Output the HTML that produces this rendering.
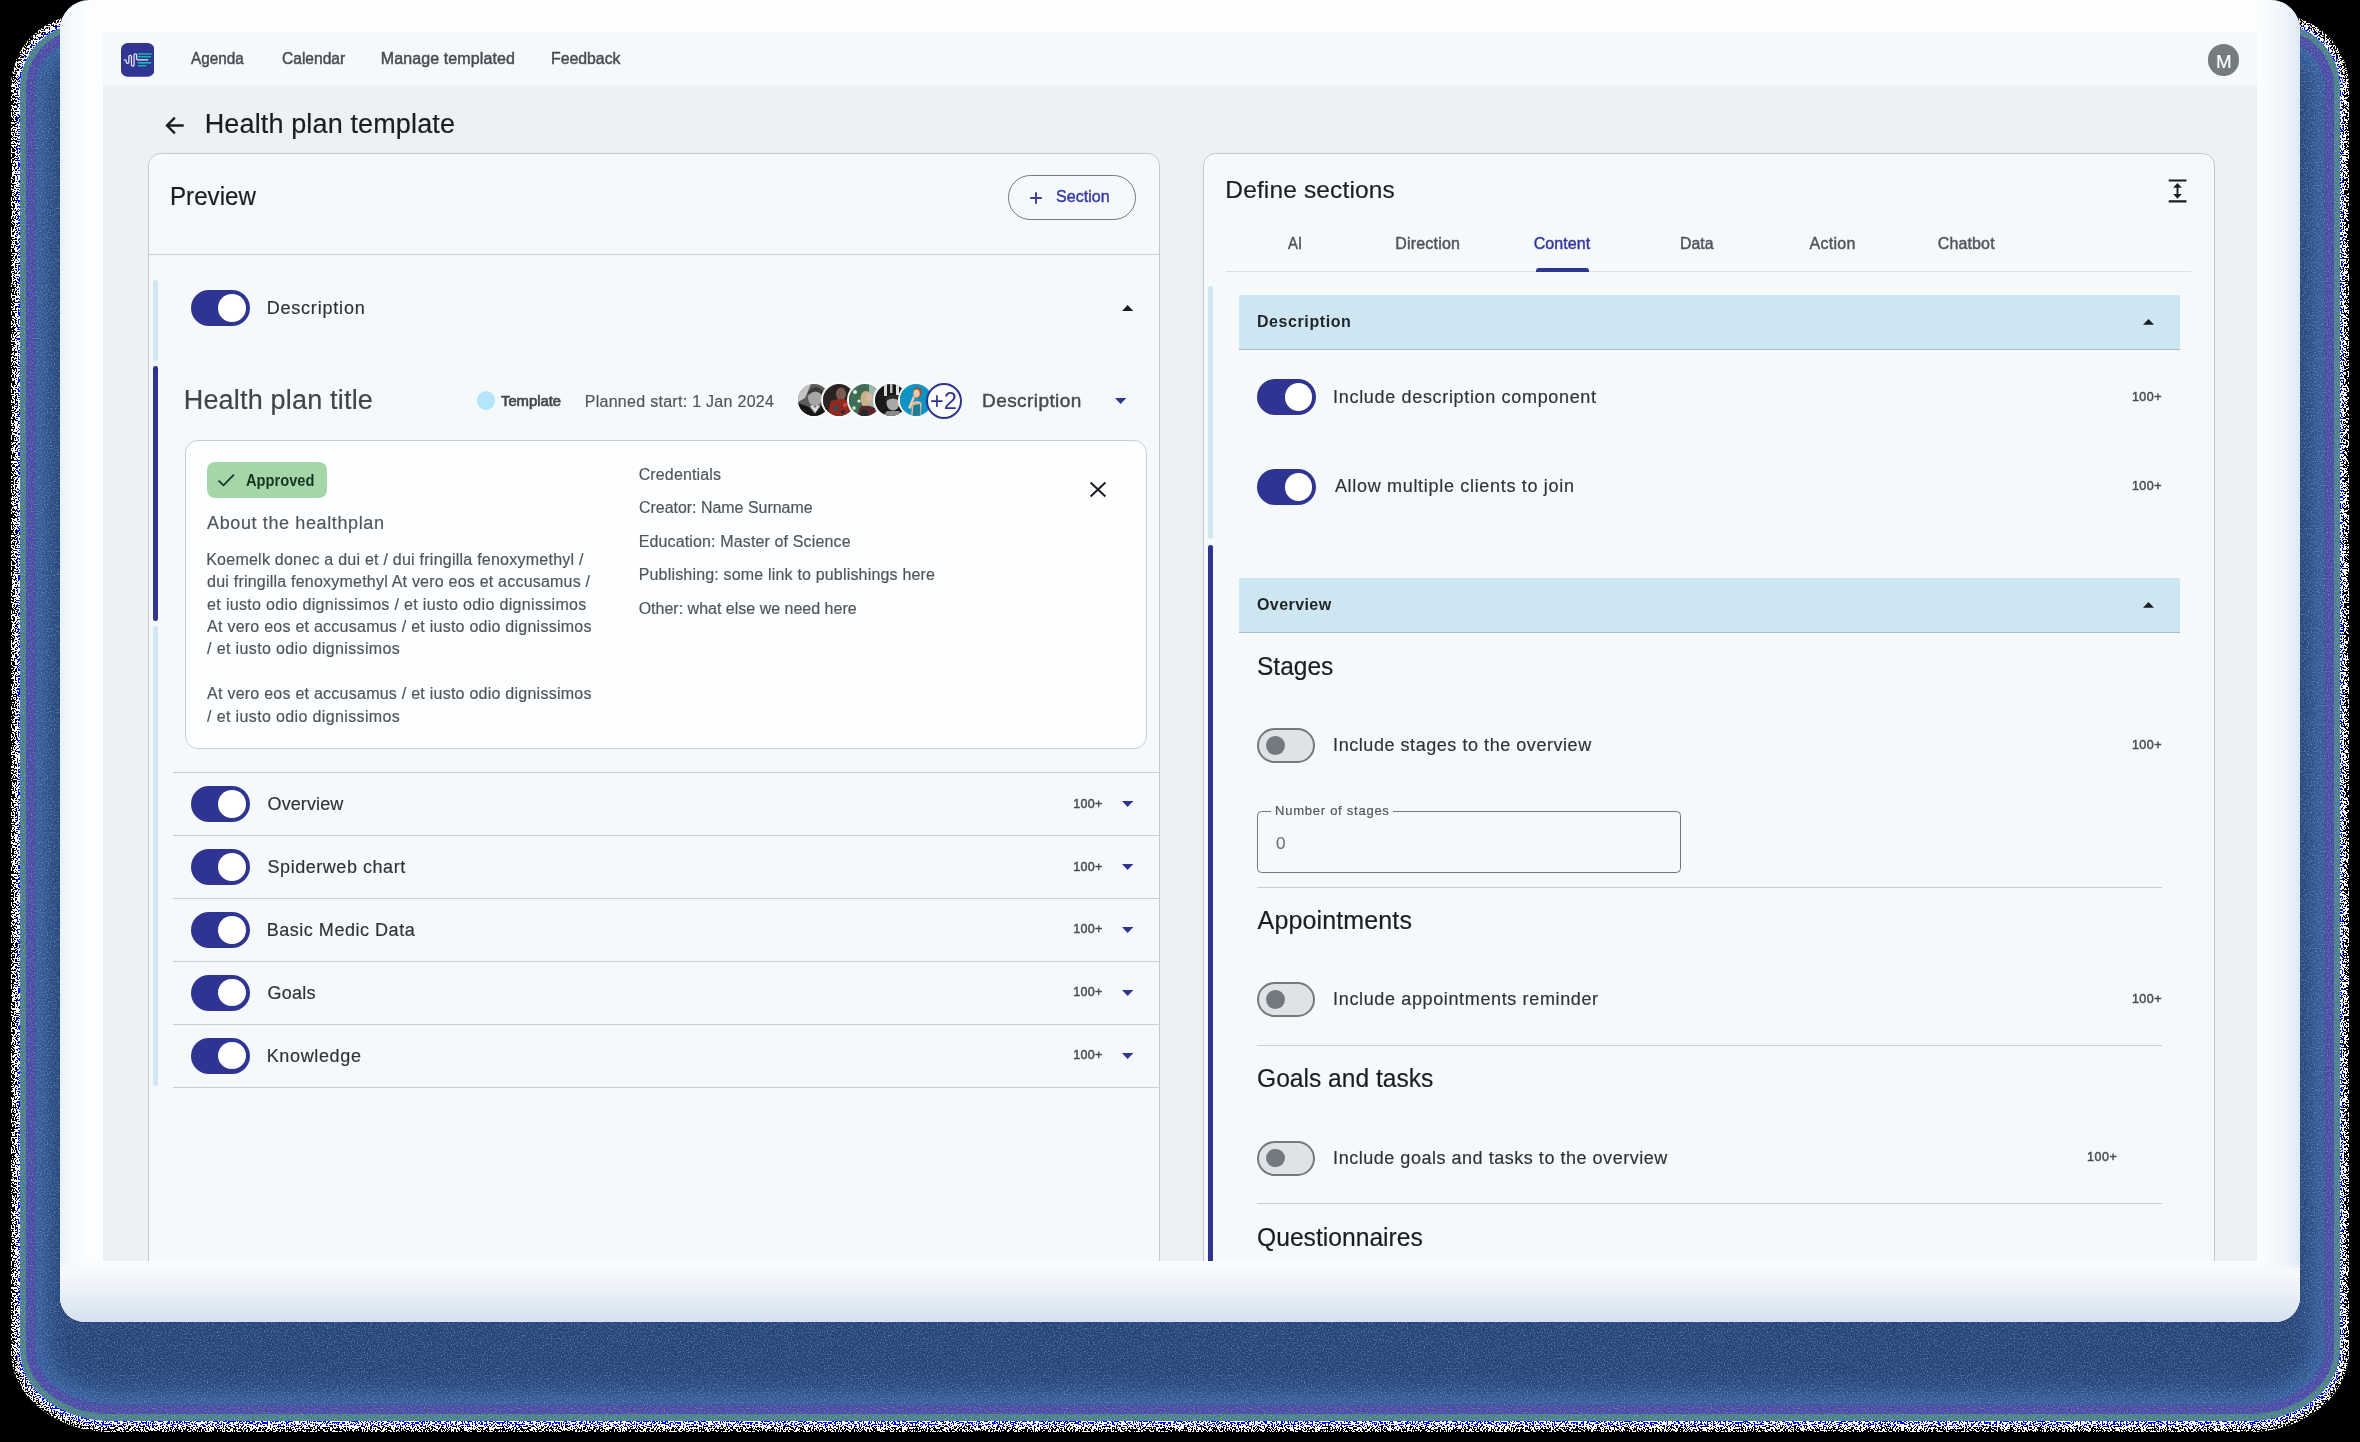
<!DOCTYPE html>
<html lang="en"><head><meta charset="utf-8"><title>Health plan template</title>
<style>

*{box-sizing:border-box;margin:0;padding:0}
html,body{width:2360px;height:1442px;overflow:hidden;background:#000}
body{position:relative;font-family:"Liberation Sans",sans-serif}
.a{position:absolute;display:block}
#txt{position:absolute;left:0;top:0;width:2360px;height:1442px;will-change:transform}
#txt .t{position:absolute;white-space:nowrap;transform-origin:0 50%;font-family:"Liberation Sans",sans-serif}
/* shadow layers (alpha dropped look) */
#s0{left:11px;top:15px;width:2338px;height:1417px;border-radius:72px 72px 100px 100px/72px 72px 80px 80px;background:#82869b}
#s0b{left:11px;top:15px;width:2338px;height:1417px;border-radius:72px 72px 100px 100px/72px 72px 80px 80px;background:#000;clip-path:inset(0)}
#s0b2{left:14px;top:18px;width:2332px;height:1411px;border-radius:69px 69px 97px 97px/69px 69px 77px 77px;background:#000}
#s0c{left:17px;top:21px;width:2326px;height:1405px;border-radius:66px 66px 94px 94px/66px 66px 74px 74px;background:#000}
#sn{left:20px;top:24px;width:2320px;height:1397px;border-radius:63px 63px 91px 91px/63px 63px 71px 71px;background:#000}
#s1{left:20px;top:24px;width:2320px;height:1397px;border-radius:63px 63px 91px 91px/63px 63px 71px 71px;background:#4a8087}
#s2{left:26px;top:30px;width:2308px;height:1384px;border-radius:57px 57px 85px 85px/57px 57px 64px 64px;background:#4a4ba4}
#s3{left:36px;top:40px;width:2288px;height:1364px;border-radius:47px 47px 75px 75px/47px 47px 54px 54px;background:#37629f}
#s4{left:66px;top:70px;width:2228px;height:1304px;border-radius:20px 20px 45px 45px/20px 20px 26px 26px;background:#254377;box-shadow:0 0 10px 12px #27467b,0 0 16px 22px #2b5088}
#frame{left:60px;top:-0.5px;width:2240px;height:1322.5px;border-radius:29.5px 29.5px 25px 25px;background:#fbfdfe;overflow:hidden}
#frame .g{left:0;top:0;width:100%;height:100%}
#screen{left:103px;top:32px;width:2154px;height:1229px;background:#edf1f4;overflow:hidden}
#nav{left:0;top:0;width:2154px;height:54px;background:#f5f9fc;box-shadow:0 1px 0 #e8ecf0}
.panel{top:121px;width:1012px;height:1200px;border:1px solid #c1c9cf;border-radius:12.5px;background:#f5f9fc}
.hl{height:1px;background:#c7ced4}
.bar{width:4.6px;border-radius:2.3px}
.tg{width:59px;height:36px;border-radius:18px;background:#2f3391}
.tg i{position:absolute;left:27.3px;top:4.2px;width:27.6px;height:27.6px;border-radius:50%;background:#fff}
.to{width:58px;height:35px;border-radius:17.5px;background:#dfe3e6;border:2px solid #737a7f}
.to i{position:absolute;left:6.4px;top:6.1px;width:18.8px;height:18.8px;border-radius:50%;background:#737a7f}
.band{left:1136.3px;width:940.5px;height:55px;background:#cee6f1;border-bottom:1px solid #a9bdc9}
.av{width:36px;height:36px;border-radius:50%;border:2px solid #fbfdfe;overflow:hidden}
.av svg{display:block}

</style></head>
<body>
<svg width="0" height="0" style="position:absolute"><defs><filter id="nbw" x="0" y="0" width="100%" height="100%" color-interpolation-filters="sRGB"><feTurbulence type="fractalNoise" baseFrequency="0.62" numOctaves="1" seed="3"/><feColorMatrix type="matrix" values="1 0 0 0 0  1 0 0 0 0  1 0 0 0 0  0 0 0 0 1"/><feComponentTransfer><feFuncR type="discrete" tableValues="0 0 0 0 0 0 0 0 0 0 0 0 0 0 0 0 0 0 0 0 0 1 1 1 1 1 1 1 1 1 1 1 1 1 1 1 1 1 1 1"/><feFuncG type="discrete" tableValues="0 0 0 0 0 0 0 0 0 0 0 0 0 0 0 0 0 0 0 0 0 1 1 1 1 1 1 1 1 1 1 1 1 1 1 1 1 1 1 1"/><feFuncB type="discrete" tableValues="0 0 0 0 0 0 0 0 0 0 0 0 0 0 0 0 0 0 0 0 0 1 1 1 1 1 1 1 1 1 1 1 1 1 1 1 1 1 1 1"/></feComponentTransfer><feComposite operator="in" in2="SourceGraphic"/></filter><filter id="nbw2" x="0" y="0" width="100%" height="100%" color-interpolation-filters="sRGB"><feTurbulence type="fractalNoise" baseFrequency="0.62" numOctaves="1" seed="5"/><feColorMatrix type="matrix" values="1 0 0 0 0  1 0 0 0 0  1 0 0 0 0  0 0 0 0 1"/><feComponentTransfer><feFuncR type="discrete" tableValues="0 0 0 0 0 0 0 0 0 0 0 0 0 0 0 0 0 0 0 1 1 1 1 1 1 1 1 1 1 1 1 1 1 1 1 1 1 1 1 1"/><feFuncG type="discrete" tableValues="0 0 0 0 0 0 0 0 0 0 0 0 0 0 0 0 0 0 0 1 1 1 1 1 1 1 1 1 1 1 1 1 1 1 1 1 1 1 1 1"/><feFuncB type="discrete" tableValues="0 0 0 0 0 0 0 0 0 0 0 0 0 0 0 0 0 0 0 1 1 1 1 1 1 1 1 1 1 1 1 1 1 1 1 1 1 1 1 1"/></feComponentTransfer><feComposite operator="in" in2="SourceGraphic"/></filter><filter id="nbl" x="0" y="0" width="100%" height="100%" color-interpolation-filters="sRGB"><feTurbulence type="fractalNoise" baseFrequency="0.62" numOctaves="1" seed="11"/><feColorMatrix type="matrix" values="1 0 0 0 0  1 0 0 0 0  0 0 0 0 1  0 0 0 0 1"/><feComponentTransfer><feFuncR type="discrete" tableValues="0 0 0 0 0 0 0 0 0 0 0 0 0 0 0 0 0 0 0 1 1 1 1 1 1 1 1 1 1 1 1 1 1 1 1 1 1 1 1 1"/><feFuncG type="discrete" tableValues="0 0 0 0 0 0 0 0 0 0 0 0 0 0 0 0 0 0 0 1 1 1 1 1 1 1 1 1 1 1 1 1 1 1 1 1 1 1 1 1"/></feComponentTransfer><feComposite operator="in" in2="SourceGraphic"/></filter><filter id="ng" x="0" y="0" width="100%" height="100%" color-interpolation-filters="sRGB"><feTurbulence type="fractalNoise" baseFrequency="0.7" numOctaves="1" seed="7"/><feColorMatrix type="matrix" values="0 0 0 0 0.7  0 0 0 0 0.78  0 0 0 0 0.9  1.3 0 0 0 -0.6"/><feComposite operator="in" in2="SourceGraphic"/></filter></defs></svg>
<div class="a" id="s0"></div><div class="a" id="s0b" style="filter:url(#nbw)"></div><div class="a" id="s0b2" style="filter:url(#nbw2)"></div><div class="a" id="s0c" style="filter:url(#nbl)"></div><div class="a" id="s1"></div><div class="a" id="s2"></div><div class="a" id="s3"></div><div class="a" id="s4"></div><div class="a" id="sn" style="filter:url(#ng)"></div>
<div class="a" id="frame"><div class="a g" style="background:linear-gradient(90deg,#ebf1f9 0,#f5f9fd 9px,rgba(251,253,254,0) 26px)"></div><div class="a g" style="background:linear-gradient(270deg,#dfe9f4 0,#eef4fa 14px,rgba(251,253,254,0) 40px)"></div><div class="a g" style="background:linear-gradient(180deg,rgba(251,253,254,0) 1262px,#f6f9fc 1272px,#eef3f9 1286px,#e3ecf5 1301px,#d4e1ef 1322px)"></div></div>
<div class="a" id="screen">
<div class="a" id="nav"></div>
<svg class="a" style="left:17.75px;top:11.15px" width="33.3" height="34" viewBox="0 0 33.3 34"><rect width="33.3" height="33.75" rx="6.6" fill="#2f3591"/><g fill="none" stroke-linecap="round"><path d="M3.2 16.9 H4.2 Q5.25 16.9 5.25 18.1 V19.1 A1.3 1.3 0 0 0 7.85 19.1 V13.6 A1.3 1.3 0 0 1 10.45 13.6 V21.8 A1.3 1.3 0 0 0 13.05 21.8 V12.1 A1.3 1.3 0 0 1 15.65 12.1 V15.7 Q15.65 16.9 16.9 16.9 H26.85" stroke="#e9e9f6" stroke-width="1.25"/><path d="M17.4 11h12.7M17.4 13.8h12.1M17.4 19.9h12.3M17.4 22.8h7.4" stroke="#14b5b2" stroke-width="1.55"/></g></svg>
<div class="a" style="left:2104.9px;top:12.4px;width:31.4px;height:31.4px;border-radius:50%;background:#757c80"></div>
<svg class="a" style="left:62.0px;top:83.9px" width="20" height="19" viewBox="0 0 20 19"><path d="M18.7 9.5H2.4M9.9 1.7L2 9.5l7.9 7.8" fill="none" stroke="#1b1d20" stroke-width="2.35"/></svg>
<div class="a panel" style="left:45px"></div>
<div class="a hl" style="left:46px;top:222px;width:1010px"></div>
<div class="a" style="left:905px;top:143.2px;width:128.2px;height:44.7px;border-radius:22.4px;border:1.2px solid #72797e"></div>
<svg class="a" style="left:927.0px;top:159.5px" width="12" height="12" viewBox="0 0 12 12"><path d="M6 0.2v11.6M0.2 6h11.6" stroke="#3a3d9f" stroke-width="1.9"/></svg>
<div class="a bar" style="left:50.2px;top:247.8px;height:80.8px;background:#cfe7f2"></div>
<div class="a bar" style="left:50.2px;top:334.2px;height:255px;background:#2f3391"></div>
<div class="a bar" style="left:50.2px;top:594.3px;height:460px;background:#cfe7f2"></div>
<div class="a tg" style="left:87.9px;top:258px"><i></i></div>
<svg class="a" style="left:1018.5px;top:272.7px" width="11.3" height="6.0" viewBox="0 0 11.3 6.0"><polygon points="0,6.0 5.65,0 11.3,6.0" fill="#1b1d20"/></svg>
<div class="a" style="left:373.9px;top:359.4px;width:18.3px;height:18.3px;border-radius:50%;background:#b3e5fc"></div>
<div class="a av" style="left:692.5px;top:350.4px"><svg width="32" height="32" viewBox="0 0 32 32"><rect width="32" height="32" fill="#5c5c5c"/><path d="M0 0H13L7 14L0 18Z" fill="#c4c4c4"/><ellipse cx="17" cy="13.5" rx="7" ry="8.5" fill="#a6a6a6"/><path d="M10 8 Q17 -1 25 7 L24.5 11 Q17 4 10.5 11Z" fill="#3a3a3a"/><path d="M0 19 L11 23 L17 30 L23 22 L32 17 V32 H0Z" fill="#161616"/><path d="M12 22 L17 29 L22 22 L19 21 L17 24 L15 21Z" fill="#d8d8d8"/></svg></div>
<div class="a av" style="left:718.2px;top:350.4px"><svg width="32" height="32" viewBox="0 0 32 32"><rect width="32" height="32" fill="#2a2322"/><ellipse cx="18" cy="10" rx="5" ry="6.5" fill="#7a5a52"/><path d="M4 32 L8 17 Q18 13 27 17 L31 32Z" fill="#8e2a1f"/><circle cx="13" cy="24" r="2.6" fill="#3d4a5c"/><circle cx="22" cy="21" r="2.2" fill="#c4493a"/><circle cx="20" cy="28" r="2" fill="#2f2a33"/></svg></div>
<div class="a av" style="left:743.9px;top:350.4px"><svg width="32" height="32" viewBox="0 0 32 32"><rect width="32" height="32" fill="#3f6e52"/><rect x="20" width="12" height="32" fill="#9fb5ae"/><circle cx="6" cy="8" r="2" fill="#dfeee6"/><circle cx="10" cy="17" r="1.6" fill="#e8f2ec"/><circle cx="5" cy="24" r="1.8" fill="#d3e6da"/><ellipse cx="17" cy="15" rx="5.5" ry="8" fill="#c9b18a"/><ellipse cx="20" cy="13" rx="3" ry="4" fill="#d9b9a6"/><path d="M8 32 L11 23 Q18 20 26 24 L28 32Z" fill="#5a2430"/><path d="M10 32 L13 26 L19 27 L18 32Z" fill="#1d2b2a"/></svg></div>
<div class="a av" style="left:769.6px;top:350.4px"><svg width="32" height="32" viewBox="0 0 32 32"><rect width="32" height="32" fill="#191919"/><rect x="9" y="0" width="3" height="12" fill="#d8d8d8"/><rect x="15" y="0" width="2.5" height="9" fill="#bdbdbd"/><rect x="21" y="1" width="3" height="10" fill="#e2e2e2"/><ellipse cx="18" cy="19" rx="6.5" ry="7.5" fill="#a9a9a9"/><path d="M10 14 Q18 7 26 14 L25 17 Q18 12 11 17Z" fill="#2b2b2b"/><path d="M8 32 L12 27 L24 27 L28 32Z" fill="#8a8a8a"/></svg></div>
<div class="a av" style="left:795.3px;top:350.4px"><svg width="32" height="32" viewBox="0 0 32 32"><rect width="32" height="32" fill="#0f93c4"/><ellipse cx="17.5" cy="8.5" rx="4.6" ry="5.4" fill="#8a5a3c"/><ellipse cx="16.5" cy="9.5" rx="3.2" ry="4" fill="#f0c8a8"/><path d="M11 32 L12.5 19 Q17 15 21.5 19 L21 32Z" fill="#e9bf9f"/><path d="M12.5 32 L13.5 21 L20 20 L20.5 32Z" fill="#1f7c93"/><path d="M8 24 L13 12 L15 13 L11 25Z" fill="#efc6a6"/></svg></div>
<div class="a" style="left:822.5px;top:351.0px;width:36.3px;height:36.3px;border-radius:50%;border:2.4px solid #2f3391;background:#fdfeff"></div>
<svg class="a" style="left:1011.9px;top:365.8px" width="11.3" height="6.0" viewBox="0 0 11.3 6.0"><polygon points="0,0 11.3,0 5.65,6.0" fill="#2f3391"/></svg>
<div class="a" style="left:82.3px;top:408.2px;width:961.5px;height:308.6px;border:1px solid #c8ced4;border-radius:13px;background:#fdfeff"></div>
<div class="a" style="left:103.9px;top:430.3px;width:120.2px;height:35.8px;border-radius:8px;background:#a5d6a7"></div>
<svg class="a" style="left:114px;top:440px" width="19" height="16" viewBox="0 0 19 16"><path d="M1.6 8.6l4.9 4.7L16.9 2.6" fill="none" stroke="#173526" stroke-width="1.8"/></svg>
<svg class="a" style="left:986px;top:449px" width="18" height="17" viewBox="0 0 18 17"><path d="M1.6 1.5l14.8 14M16.4 1.5L1.6 15.5" fill="none" stroke="#1b1d20" stroke-width="2"/></svg>
<div class="a hl" style="left:70px;top:739.7px;width:986.5px"></div>
<div class="a hl" style="left:70px;top:803.0px;width:986.5px"></div>
<div class="a hl" style="left:70px;top:866.1px;width:986.5px"></div>
<div class="a hl" style="left:70px;top:928.9px;width:986.5px"></div>
<div class="a hl" style="left:70px;top:991.9px;width:986.5px"></div>
<div class="a hl" style="left:70px;top:1054.7px;width:986.5px"></div>
<div class="a tg" style="left:87.9px;top:754.0px"><i></i></div>
<svg class="a" style="left:1018.7px;top:769.2px" width="11.3" height="6.0" viewBox="0 0 11.3 6.0"><polygon points="0,0 11.3,0 5.65,6.0" fill="#2f3391"/></svg>
<div class="a tg" style="left:87.9px;top:817.0px"><i></i></div>
<svg class="a" style="left:1018.7px;top:832.2px" width="11.3" height="6.0" viewBox="0 0 11.3 6.0"><polygon points="0,0 11.3,0 5.65,6.0" fill="#2f3391"/></svg>
<div class="a tg" style="left:87.9px;top:880.0px"><i></i></div>
<svg class="a" style="left:1018.7px;top:895.2px" width="11.3" height="6.0" viewBox="0 0 11.3 6.0"><polygon points="0,0 11.3,0 5.65,6.0" fill="#2f3391"/></svg>
<div class="a tg" style="left:87.9px;top:942.7px"><i></i></div>
<svg class="a" style="left:1018.7px;top:957.9px" width="11.3" height="6.0" viewBox="0 0 11.3 6.0"><polygon points="0,0 11.3,0 5.65,6.0" fill="#2f3391"/></svg>
<div class="a tg" style="left:87.9px;top:1005.5px"><i></i></div>
<svg class="a" style="left:1018.7px;top:1020.7px" width="11.3" height="6.0" viewBox="0 0 11.3 6.0"><polygon points="0,0 11.3,0 5.65,6.0" fill="#2f3391"/></svg>
<div class="a panel" style="left:1100px"></div>
<svg class="a" style="left:2065.4px;top:147.0px" width="19" height="24" viewBox="0 0 19 24"><path d="M0.7 1.5h17.8M0.7 22.3h17.8" stroke="#1b1d20" stroke-width="2.2"/><path d="M9.5 6.5v10.8" stroke="#1b1d20" stroke-width="1.9"/><path d="M5.2 8.7L9.5 4.1l4.3 4.6zM5.2 15.1l4.3 4.6 4.3-4.6z" fill="#1b1d20"/></svg>
<div class="a" style="left:1123px;top:239.1px;width:965.2px;height:1px;background:#dce1e5"></div>
<div class="a" style="left:1433.3px;top:236.4px;width:52.9px;height:3.4px;border-radius:3px 3px 0 0;background:#2f3391"></div>
<div class="a bar" style="left:1105.3px;top:254px;height:253.3px;background:#cfe7f2"></div>
<div class="a bar" style="left:1105.3px;top:513px;height:760px;background:#2f3391"></div>
<div class="a band" style="top:263px"></div>
<svg class="a" style="left:2039.9px;top:287.2px" width="11" height="5.8" viewBox="0 0 11 5.8"><polygon points="0,5.8 5.5,0 11,5.8" fill="#1b1d20"/></svg>
<div class="a band" style="top:546.2px"></div>
<svg class="a" style="left:2039.9px;top:570.2px" width="11" height="5.8" viewBox="0 0 11 5.8"><polygon points="0,5.8 5.5,0 11,5.8" fill="#1b1d20"/></svg>
<div class="a tg" style="left:1154.4px;top:347.0px"><i></i></div>
<div class="a tg" style="left:1154.4px;top:437.0px"><i></i></div>
<div class="a to" style="left:1154.4px;top:695.7px"><i></i></div>
<div class="a to" style="left:1154.4px;top:950.2px"><i></i></div>
<div class="a to" style="left:1154.4px;top:1108.6px"><i></i></div>
<div class="a" style="left:1154.4px;top:778.5px;width:423.6px;height:62.2px;border:1.2px solid #70777c;border-radius:4.5px"></div>
<div class="a" style="left:1168.4px;top:776px;width:122px;height:6px;background:#f5f9fc"></div>
<div class="a hl" style="left:1154.4px;top:854.7px;width:904.6px"></div>
<div class="a hl" style="left:1154.4px;top:1012.9px;width:904.6px"></div>
<div class="a hl" style="left:1154.4px;top:1171.0px;width:904.6px"></div>
</div>
<div id="txt">
<span class="t" id="t0" style="left:191.08px;top:48.36px;font-size:16px;line-height:21px;color:#474c52;-webkit-text-stroke:0.45px;transform:scaleX(0.9548);">Agenda</span>
<span class="t" id="t1" style="left:281.58px;top:48.36px;font-size:16px;line-height:21px;color:#474c52;-webkit-text-stroke:0.45px;transform:scaleX(0.9720);">Calendar</span>
<span class="t" id="t2" style="left:380.70px;top:48.36px;font-size:16px;line-height:21px;color:#474c52;-webkit-text-stroke:0.45px;letter-spacing:0.119px;">Manage templated</span>
<span class="t" id="t3" style="left:551.18px;top:48.36px;font-size:16px;line-height:21px;color:#474c52;-webkit-text-stroke:0.45px;transform:scaleX(0.9888);">Feedback</span>
<span class="t" id="t4" style="left:2215.70px;top:50.56px;font-size:18px;line-height:23px;color:#ffffff;-webkit-text-stroke:0.18px;transform:scaleX(1.0413);">M</span>
<span class="t" id="t5" style="left:204.73px;top:106.84px;font-size:27px;line-height:35px;color:#1b1d20;-webkit-text-stroke:0.18px;letter-spacing:0.136px;">Health plan template</span>
<span class="t" id="t6" style="left:169.83px;top:180.04px;font-size:25px;line-height:32px;color:#1b1d20;-webkit-text-stroke:0.18px;transform:scaleX(0.9657);">Preview</span>
<span class="t" id="t7" style="left:1056.08px;top:186.46px;font-size:16px;line-height:21px;color:#3a3d9f;-webkit-text-stroke:0.45px;letter-spacing:0.021px;">Section</span>
<span class="t" id="t8" style="left:266.64px;top:296.76px;font-size:18px;line-height:23px;color:#2e3338;-webkit-text-stroke:0.18px;letter-spacing:0.810px;">Description</span>
<span class="t" id="t9" style="left:183.73px;top:383.44px;font-size:27px;line-height:35px;color:#3f454a;-webkit-text-stroke:0.18px;letter-spacing:0.189px;">Health plan title</span>
<span class="t" id="t10" style="left:501.15px;top:390.90px;font-size:15px;line-height:20px;color:#42474d;-webkit-text-stroke:0.7px;transform:scaleX(0.9861);">Template</span>
<span class="t" id="t11" style="left:584.70px;top:390.86px;font-size:16px;line-height:21px;color:#4f555b;-webkit-text-stroke:0.18px;letter-spacing:0.286px;">Planned start: 1 Jan 2024</span>
<span class="t" id="t12" style="left:929.55px;top:385.93px;font-size:23px;line-height:30px;color:#2f3391;transform:scaleX(1.0319);">+2</span>
<span class="t" id="t13" style="left:982.05px;top:387.82px;font-size:19px;line-height:25px;color:#464b51;-webkit-text-stroke:0.45px;letter-spacing:0.424px;">Description</span>
<span class="t" id="t14" style="left:246.08px;top:469.96px;font-size:16px;line-height:21px;color:#173526;font-weight:700;transform:scaleX(0.9173);">Approved</span>
<span class="t" id="t15" style="left:207.0px;top:511.56px;font-size:18px;line-height:23px;color:#4f555b;-webkit-text-stroke:0.18px;letter-spacing:0.624px;">About the healthplan</span>
<span class="t" id="t16" style="left:206.20px;top:548.76px;font-size:16px;line-height:21px;color:#4e5459;-webkit-text-stroke:0.18px;letter-spacing:0.243px;">Koemelk donec a dui et / dui fringilla fenoxymethyl /</span>
<span class="t" id="t17" style="left:207.10px;top:571.16px;font-size:16px;line-height:21px;color:#4e5459;-webkit-text-stroke:0.18px;letter-spacing:0.216px;">dui fringilla fenoxymethyl At vero eos et accusamus /</span>
<span class="t" id="t18" style="left:207.10px;top:593.56px;font-size:16px;line-height:21px;color:#4e5459;-webkit-text-stroke:0.18px;letter-spacing:0.332px;">et iusto odio dignissimos / et iusto odio dignissimos</span>
<span class="t" id="t19" style="left:207.10px;top:615.96px;font-size:16px;line-height:21px;color:#4e5459;-webkit-text-stroke:0.18px;letter-spacing:0.247px;">At vero eos et accusamus / et iusto odio dignissimos</span>
<span class="t" id="t20" style="left:207.10px;top:638.46px;font-size:16px;line-height:21px;color:#4e5459;-webkit-text-stroke:0.18px;letter-spacing:0.364px;">/ et iusto odio dignissimos</span>
<span class="t" id="t21" style="left:207.10px;top:683.26px;font-size:16px;line-height:21px;color:#4e5459;-webkit-text-stroke:0.18px;letter-spacing:0.247px;">At vero eos et accusamus / et iusto odio dignissimos</span>
<span class="t" id="t22" style="left:207.10px;top:705.66px;font-size:16px;line-height:21px;color:#4e5459;-webkit-text-stroke:0.18px;letter-spacing:0.364px;">/ et iusto odio dignissimos</span>
<span class="t" id="t23" style="left:638.66px;top:463.56px;font-size:16px;line-height:21px;color:#4f555b;-webkit-text-stroke:0.18px;letter-spacing:0.140px;">Credentials</span>
<span class="t" id="t24" style="left:638.66px;top:497.06px;font-size:16px;line-height:21px;color:#4f555b;-webkit-text-stroke:0.18px;transform:scaleX(0.9957);">Creator: Name Surname</span>
<span class="t" id="t25" style="left:638.66px;top:530.86px;font-size:16px;line-height:21px;color:#4f555b;-webkit-text-stroke:0.18px;letter-spacing:0.140px;">Education: Master of Science</span>
<span class="t" id="t26" style="left:638.66px;top:564.46px;font-size:16px;line-height:21px;color:#4f555b;-webkit-text-stroke:0.18px;letter-spacing:0.181px;">Publishing: some link to publishings here</span>
<span class="t" id="t27" style="left:638.66px;top:598.26px;font-size:16px;line-height:21px;color:#4f555b;-webkit-text-stroke:0.18px;letter-spacing:0.003px;">Other: what else we need here</span>
<span class="t" id="t28" style="left:267.54px;top:793.26px;font-size:18px;line-height:23px;color:#2e3338;-webkit-text-stroke:0.18px;letter-spacing:0.101px;">Overview</span>
<span class="t" id="t29" style="left:1073.30px;top:795.67px;font-size:12.5px;line-height:16px;color:#474c52;-webkit-text-stroke:0.45px;letter-spacing:0.267px;">100+</span>
<span class="t" id="t30" style="left:267.54px;top:856.16px;font-size:18px;line-height:23px;color:#2e3338;-webkit-text-stroke:0.18px;letter-spacing:0.541px;">Spiderweb chart</span>
<span class="t" id="t31" style="left:1073.30px;top:858.57px;font-size:12.5px;line-height:16px;color:#474c52;-webkit-text-stroke:0.45px;letter-spacing:0.267px;">100+</span>
<span class="t" id="t32" style="left:266.64px;top:919.06px;font-size:18px;line-height:23px;color:#2e3338;-webkit-text-stroke:0.18px;letter-spacing:0.535px;">Basic Medic Data</span>
<span class="t" id="t33" style="left:1073.30px;top:921.47px;font-size:12.5px;line-height:16px;color:#474c52;-webkit-text-stroke:0.45px;letter-spacing:0.267px;">100+</span>
<span class="t" id="t34" style="left:267.54px;top:981.96px;font-size:18px;line-height:23px;color:#2e3338;-webkit-text-stroke:0.18px;letter-spacing:0.238px;">Goals</span>
<span class="t" id="t35" style="left:1073.30px;top:984.37px;font-size:12.5px;line-height:16px;color:#474c52;-webkit-text-stroke:0.45px;letter-spacing:0.267px;">100+</span>
<span class="t" id="t36" style="left:266.64px;top:1044.86px;font-size:18px;line-height:23px;color:#2e3338;-webkit-text-stroke:0.18px;letter-spacing:0.658px;">Knowledge</span>
<span class="t" id="t37" style="left:1073.30px;top:1047.27px;font-size:12.5px;line-height:16px;color:#474c52;-webkit-text-stroke:0.45px;letter-spacing:0.267px;">100+</span>
<span class="t" id="t38" style="left:1225.32px;top:174.31px;font-size:24.5px;line-height:32px;color:#1b1d20;-webkit-text-stroke:0.18px;letter-spacing:0.145px;">Define sections</span>
<span class="t" id="t39" style="left:1288.14px;top:233.46px;font-size:16px;line-height:21px;color:#4f555b;-webkit-text-stroke:0.45px;transform:scaleX(0.9283);">AI</span>
<span class="t" id="t40" style="left:1395.20px;top:233.46px;font-size:16px;line-height:21px;color:#4f555b;-webkit-text-stroke:0.45px;letter-spacing:0.200px;">Direction</span>
<span class="t" id="t41" style="left:1533.70px;top:233.46px;font-size:16px;line-height:21px;color:#3438a0;-webkit-text-stroke:0.45px;letter-spacing:0.073px;">Content</span>
<span class="t" id="t42" style="left:1679.72px;top:233.46px;font-size:16px;line-height:21px;color:#4f555b;-webkit-text-stroke:0.45px;transform:scaleX(0.9912);">Data</span>
<span class="t" id="t43" style="left:1809.58px;top:233.46px;font-size:16px;line-height:21px;color:#4f555b;-webkit-text-stroke:0.45px;letter-spacing:0.259px;">Action</span>
<span class="t" id="t44" style="left:1937.70px;top:233.46px;font-size:16px;line-height:21px;color:#4f555b;-webkit-text-stroke:0.45px;letter-spacing:0.142px;">Chatbot</span>
<span class="t" id="t45" style="left:1256.98px;top:311.26px;font-size:16px;line-height:21px;color:#1f2428;font-weight:700;letter-spacing:0.584px;">Description</span>
<span class="t" id="t46" style="left:1333.12px;top:386.16px;font-size:18px;line-height:23px;color:#2e3338;-webkit-text-stroke:0.18px;letter-spacing:0.671px;">Include description component</span>
<span class="t" id="t47" style="left:2131.89px;top:388.67px;font-size:12.5px;line-height:16px;color:#474c52;-webkit-text-stroke:0.45px;letter-spacing:0.487px;">100+</span>
<span class="t" id="t48" style="left:1334.92px;top:475.46px;font-size:18px;line-height:23px;color:#2e3338;-webkit-text-stroke:0.18px;letter-spacing:0.688px;">Allow multiple clients to join</span>
<span class="t" id="t49" style="left:2131.89px;top:478.17px;font-size:12.5px;line-height:16px;color:#474c52;-webkit-text-stroke:0.45px;letter-spacing:0.487px;">100+</span>
<span class="t" id="t50" style="left:1256.98px;top:594.46px;font-size:16px;line-height:21px;color:#1f2428;font-weight:700;letter-spacing:0.423px;">Overview</span>
<span class="t" id="t51" style="left:1256.71px;top:649.84px;font-size:25px;line-height:32px;color:#1b1d20;-webkit-text-stroke:0.18px;transform:scaleX(0.9806);">Stages</span>
<span class="t" id="t52" style="left:1333.12px;top:734.06px;font-size:18px;line-height:23px;color:#2e3338;-webkit-text-stroke:0.18px;letter-spacing:0.549px;">Include stages to the overview</span>
<span class="t" id="t53" style="left:2131.89px;top:736.67px;font-size:12.5px;line-height:16px;color:#474c52;-webkit-text-stroke:0.45px;letter-spacing:0.487px;">100+</span>
<span class="t" id="t54" style="left:1275.05px;top:802.30px;font-size:13px;line-height:17px;color:#4f555b;-webkit-text-stroke:0.18px;letter-spacing:0.748px;">Number of stages</span>
<span class="t" id="t55" style="left:1275.62px;top:832.66px;font-size:16px;line-height:21px;color:#6f767b;-webkit-text-stroke:0.18px;transform:scaleX(1.0712);">0</span>
<span class="t" id="t56" style="left:1257.61px;top:903.84px;font-size:25px;line-height:32px;color:#1b1d20;-webkit-text-stroke:0.18px;letter-spacing:0.128px;">Appointments</span>
<span class="t" id="t57" style="left:1333.12px;top:988.36px;font-size:18px;line-height:23px;color:#2e3338;-webkit-text-stroke:0.18px;letter-spacing:0.637px;">Include appointments reminder</span>
<span class="t" id="t58" style="left:2131.89px;top:990.87px;font-size:12.5px;line-height:16px;color:#474c52;-webkit-text-stroke:0.45px;letter-spacing:0.487px;">100+</span>
<span class="t" id="t59" style="left:1256.71px;top:1062.24px;font-size:25px;line-height:32px;color:#1b1d20;-webkit-text-stroke:0.18px;transform:scaleX(0.9838);">Goals and tasks</span>
<span class="t" id="t60" style="left:1333.12px;top:1146.76px;font-size:18px;line-height:23px;color:#2e3338;-webkit-text-stroke:0.18px;letter-spacing:0.526px;">Include goals and tasks to the overview</span>
<span class="t" id="t61" style="left:2086.88px;top:1149.37px;font-size:12.5px;line-height:16px;color:#474c52;-webkit-text-stroke:0.45px;letter-spacing:0.612px;">100+</span>
<span class="t" id="t62" style="left:1256.71px;top:1221.14px;font-size:25px;line-height:32px;color:#1b1d20;-webkit-text-stroke:0.18px;transform:scaleX(0.9862);">Questionnaires</span>
</div>
</body></html>
